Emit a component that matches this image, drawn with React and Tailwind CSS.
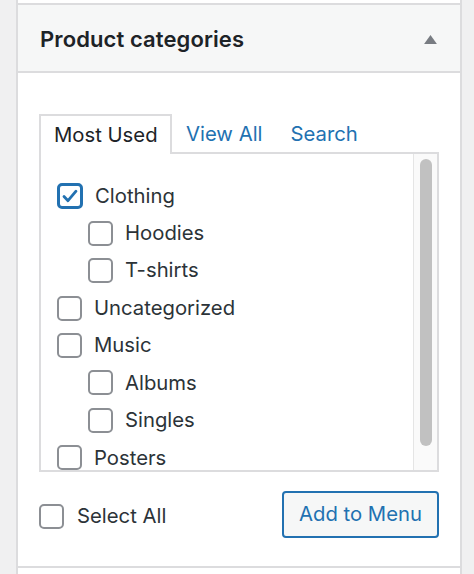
import React from 'react';

const items = [
  { label: 'Clothing', checked: true, child: false },
  { label: 'Hoodies', child: true },
  { label: 'T-shirts', child: true },
  { label: 'Uncategorized', child: false },
  { label: 'Music', child: false },
  { label: 'Albums', child: true },
  { label: 'Singles', child: true },
  { label: 'Posters', child: false },
];

const Box = ({ checked }) =>
  checked ? (
    <span className="w-[26px] h-[26px] rounded-[5px] border-[3px] border-[#2271b1] flex items-center justify-center shrink-0">
      <svg viewBox="0 0 20 20" className="w-[20px] h-[20px]">
        <path d="M4 10.5l4 4.2 8-9.5" fill="none" stroke="#2271b1" strokeWidth="2.8" strokeLinecap="round" strokeLinejoin="round" />
      </svg>
    </span>
  ) : (
    <span className="w-[25px] h-[25px] rounded-[5px] border-2 border-[#8c8f94] bg-white shrink-0" />
  );

export default function App() {
  return (
    <div className="w-[474px] h-[574px] bg-[#f0f0f1] overflow-hidden text-[#1d2327]" style={{ fontFamily: 'Inter, "Noto Sans", sans-serif' }}>
      <div className="ml-[16px] w-[446px] h-full bg-white border-x-2 border-[#dcdcde] flex flex-col">
        <div className="h-[5px] border-b-2 border-[#dcdcde]" />
        {/* Header */}
        <div className="h-[68px] bg-[#f6f7f7] border-b-2 border-[#dcdcde] flex items-center justify-between pl-[22px] pr-[22px]">
          <h2 className="text-[22px] font-semibold tracking-[0.1px] mt-[3px]">Product categories</h2>
          <svg viewBox="0 0 16 12" className="w-[15px] h-[11px] mt-[2px]">
            <path d="M8 1L15 11H1z" fill="#787c82" />
          </svg>
        </div>

        <div className="px-[21px] pt-[39px]">
          {/* Tabs */}
          <div className="flex items-end text-[20.3px]">
            <div className="h-[40px] w-[133px] border-2 border-b-0 border-[#dcdcde] flex items-center pl-[13px] relative top-[2px] bg-white z-10">
              Most Used
            </div>
            <span className="text-[#2271b1] ml-[14px] mb-[3px]">View All</span>
            <span className="text-[#2271b1] ml-[28px] mb-[3px]">Search</span>
          </div>

          {/* List */}
          <div className="h-[320px] border-2 border-[#dcdcde] flex overflow-hidden">
            <div className="flex-1 pt-[23px] pl-[16px] flex flex-col">
              {items.map((it) => (
                <div key={it.label} className={`h-[37.45px] shrink-0 flex items-center gap-[12px] text-[20.3px] text-[#2c3338] ${it.child ? 'pl-[31px]' : ''}`}>
                  <Box checked={it.checked} />
                  <span>{it.label}</span>
                </div>
              ))}
            </div>
            <div className="w-[24px] border-l border-[#e5e5e5] bg-[#fafafa] flex justify-center pt-[5px]">
              <div className="w-[12px] h-[287px] rounded-full bg-[#c1c1c1]" />
            </div>
          </div>

          {/* Footer */}
          <div className="flex items-center justify-between mt-[19px]">
            <label className="flex items-center gap-[13px] text-[20.3px] text-[#2c3338] mt-[4px]">
              <Box />
              <span>Select All</span>
            </label>
            <button className="w-[157px] h-[47px] rounded-[4px] border-2 border-[#2271b1] bg-[#f6f7f7] text-[#2271b1] text-[20.3px]">
              Add to Menu
            </button>
          </div>
        </div>

        <div className="mt-auto mb-[6px] border-b-2 border-[#dcdcde]" />
      </div>
    </div>
  );
}
